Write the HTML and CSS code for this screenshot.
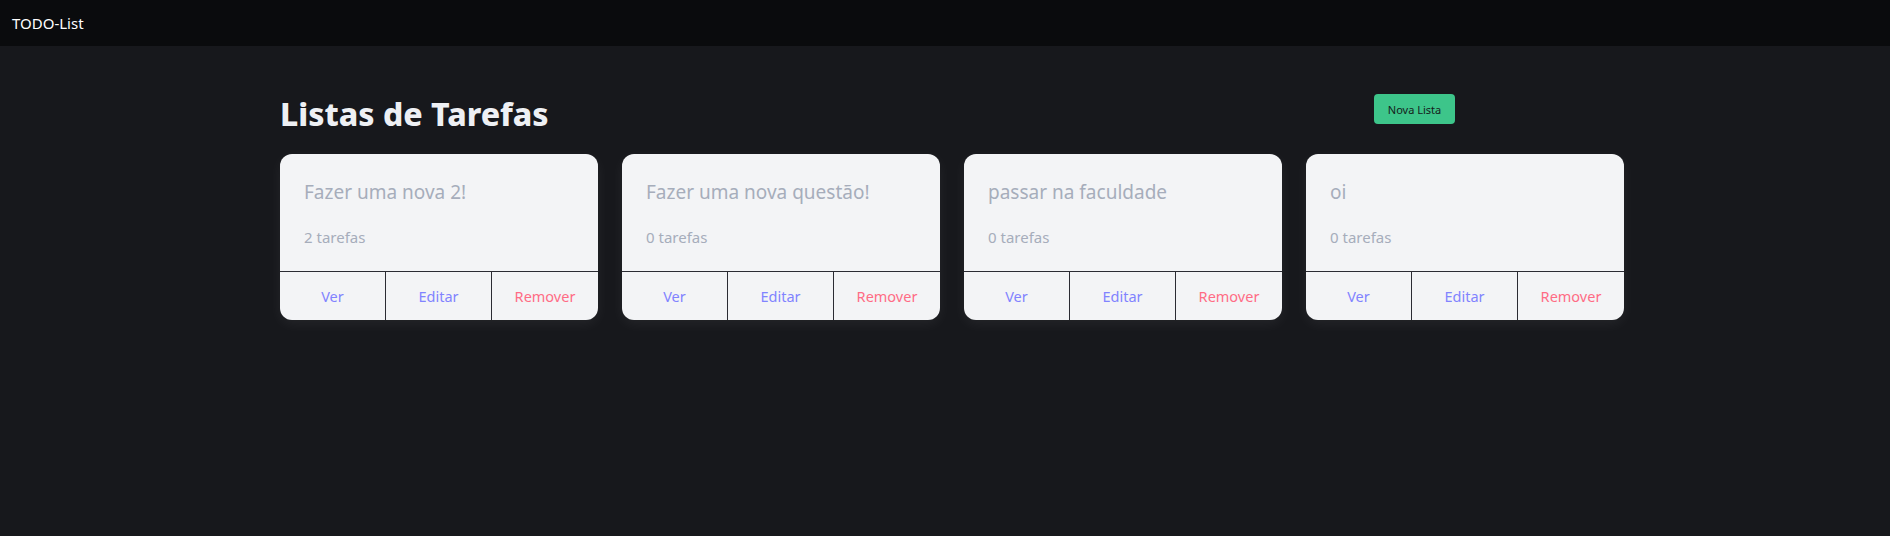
FILE: index.html
```html
<!DOCTYPE html>
<html lang="pt-BR">
<head>
<meta charset="utf-8">
<title>TODO-List</title>
<link rel="stylesheet" href="styles.css">
</head>
<body>
<header class="topbar">
  <span class="brand">TODO-List</span>
</header>
<main class="page">
  <div class="page-head">
    <h1 class="page-title">Listas de Tarefas</h1>
    <button class="btn-new">Nova Lista</button>
  </div>
  <div class="cards">
    <div class="card">
      <div class="card-body">
        <div class="card-title">Fazer uma nova 2!</div>
        <div class="card-count">2 tarefas</div>
      </div>
      <div class="card-actions">
        <button class="act act-view">Ver</button>
        <button class="act act-edit">Editar</button>
        <button class="act act-remove">Remover</button>
      </div>
    </div>
    <div class="card">
      <div class="card-body">
        <div class="card-title">Fazer uma nova questão!</div>
        <div class="card-count">0 tarefas</div>
      </div>
      <div class="card-actions">
        <button class="act act-view">Ver</button>
        <button class="act act-edit">Editar</button>
        <button class="act act-remove">Remover</button>
      </div>
    </div>
    <div class="card">
      <div class="card-body">
        <div class="card-title">passar na faculdade</div>
        <div class="card-count">0 tarefas</div>
      </div>
      <div class="card-actions">
        <button class="act act-view">Ver</button>
        <button class="act act-edit">Editar</button>
        <button class="act act-remove">Remover</button>
      </div>
    </div>
    <div class="card">
      <div class="card-body">
        <div class="card-title">oi</div>
        <div class="card-count">0 tarefas</div>
      </div>
      <div class="card-actions">
        <button class="act act-view">Ver</button>
        <button class="act act-edit">Editar</button>
        <button class="act act-remove">Remover</button>
      </div>
    </div>
  </div>
</main>
</body>
</html>
```
FILE: styles.css
```css
* { box-sizing: border-box; }
html, body {
  margin: 0;
  height: 100%;
}
body {
  background: #17181c;
  font-family: "Noto Sans", "Open Sans", sans-serif;
  color: #f3f4f6;
}
.topbar {
  height: 46px;
  background: #0a0b0d;
  display: flex;
  align-items: center;
  padding-left: 12px;
}
.brand {
  font-size: 15px;
  color: #ffffff;
}
.page {
  margin-left: 280px;
  width: 1344px;
  padding-top: 32px;
}
.page-head {
  width: 1175px;
  display: flex;
  justify-content: space-between;
  align-items: flex-start;
}
.page-title {
  margin: 16px 0 0 0;
  font-size: 32px;
  line-height: 40px;
  font-weight: 800;
  color: #eef0f4;
}
.btn-new {
  margin-top: 16px;
  height: 30px;
  width: 81px;
  border: none;
  border-radius: 4px;
  background: #3dc58a;
  color: #15211b;
  font-family: inherit;
  font-size: 11px;
  padding: 0;
  cursor: pointer;
}
.cards {
  margin-top: 20px;
  display: grid;
  grid-template-columns: repeat(4, 318px);
  gap: 24px;
}
.card {
  background: #f3f4f6;
  border-radius: 12px;
  overflow: hidden;
  box-shadow: 0 4px 14px rgba(255, 255, 255, 0.06);
}
.card-body {
  height: 117px;
  padding: 24px 24px 0 24px;
}
.card-title {
  font-size: 19px;
  line-height: 28px;
  color: #a6adbb;
}
.card-count {
  margin-top: 20px;
  font-size: 15px;
  line-height: 22px;
  color: #a6adbb;
}
.card-actions {
  display: grid;
  grid-template-columns: 105px 106px 107px;
  border-top: 1px solid #2b2c33;
  height: 49px;
}
.act {
  border: none;
  background: transparent;
  font-family: inherit;
  font-size: 14.5px;
  padding: 0;
  cursor: pointer;
}
.act + .act {
  border-left: 1px solid #2b2c33;
}
.act-view, .act-edit { color: #8183ff; }
.act-remove { color: #ff6c85; }
```
